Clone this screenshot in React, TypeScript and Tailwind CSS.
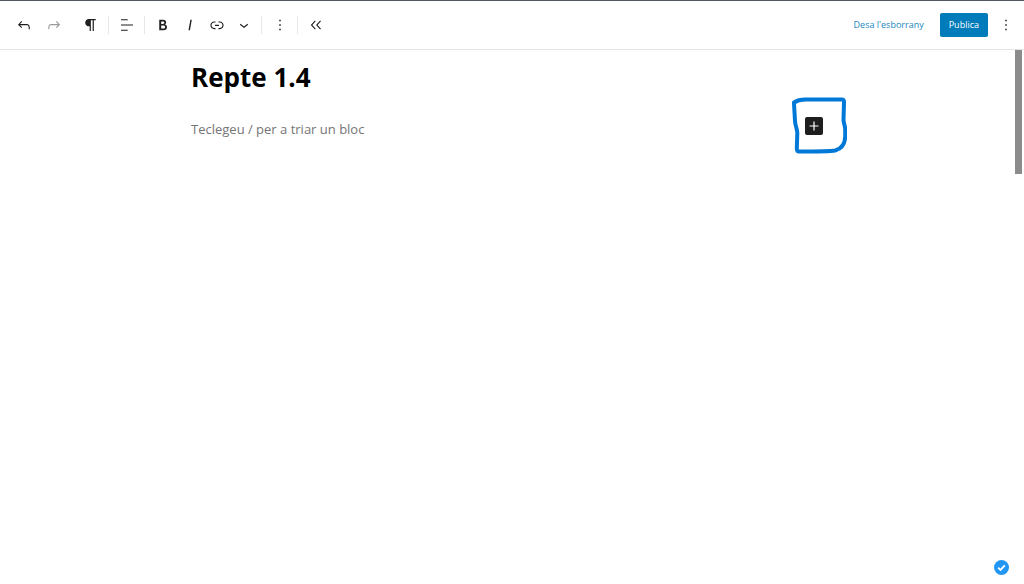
import { useState } from "react";
import type { ReactNode } from "react";
import clsx from "clsx";

const icons = {
  undo: "M18.3 11.7c-.6-.6-1.4-.9-2.3-.9H6.7l2.9-3.3-1.1-1-4.5 5L8.5 16l1-1-2.7-2.7H16c.5 0 .9.2 1.3.5 1 1 1 3.4 1 4.5v.3h1.5v-.2c0-1.5 0-4.3-1.5-5.7z",
  redo: "M15.6 6.5l-1.1 1 2.9 3.3H8c-.9 0-1.7.3-2.3.9-1.4 1.5-1.4 4.2-1.4 5.6v.2h1.5v-.3c0-1.1 0-3.5 1-4.5.3-.3.7-.5 1.3-.5h9.2L14.5 15l1.1 1.1 4.6-4.6-4.6-5z",
  paragraph: "M18.300 4v1.600h-2.500V20h-1.600V5.600h-2.400V20h-1.600v-6.200H9.300C6.500 13.800 4.300 11.600 4.300 8.900S6.500 4 9.300 4z",
  align: "M4 19.8h8.9v-1.5H4v1.5zm8.9-15.6H4v1.5h8.9V4.2zm-8.9 7v1.5h16v-1.5H4z",
  bold: "M14.7 11.3c1-.6 1.5-1.6 1.5-3 0-2.3-1.3-3.4-4-3.4H7v14h5.8c1.4 0 2.5-.3 3.3-1 .8-.7 1.2-1.7 1.2-2.9.1-1.9-.8-3.1-2.6-3.7zm-5.1-4h2.3c.6 0 1.1.1 1.4.4.3.3.5.7.5 1.2s-.2 1-.5 1.2c-.3.3-.8.4-1.4.4H9.6V7.3zm4.6 9c-.4.3-1 .4-1.7.4H9.6v-3.9h2.9c.7 0 1.3.2 1.7.5.4.3.6.8.6 1.5s-.2 1.2-.6 1.5z",
  italic: "M12.5 5L10 19h1.9l2.5-14z",
  link: "M15.6 7.2H14v1.5h1.6c2 0 3.7 1.7 3.7 3.7s-1.7 3.7-3.7 3.7H14v1.5h1.6c2.8 0 5.2-2.3 5.2-5.2 0-2.9-2.3-5.2-5.2-5.2zM4.7 12.4c0-2 1.7-3.7 3.7-3.7H10V7.2H8.4c-2.9 0-5.2 2.3-5.2 5.2 0 2.9 2.3 5.2 5.2 5.2H10v-1.5H8.4c-2 0-3.7-1.7-3.7-3.7zm4.6.9h5.3v-1.5H9.3v1.5z",
  chevron: "M17.5 11.6L12 16l-5.5-4.4.9-1.2L12 14l4.5-3.6 1 1.2z",
  more: "M13 19h-2v-2h2v2zm0-6h-2v-2h2v2zm0-6h-2V5h2v2z",
  collapse: "M11.6 7l-1.1-1-5.4 6 5.4 6 1.1-1-4.5-5zM18.6 7l-1.1-1-5.4 6 5.4 6 1.1-1-4.5-5z",
  plus: "M18 11.2h-5.2V6h-1.6v5.2H6v1.6h5.2V18h1.6v-5.2H18z",
};

type IconName = keyof typeof icons;

function Icon({ name }: { name: IconName }) {
  return (
    <svg viewBox="0 0 24 24" className="size-[18px] shrink-0" fill="currentColor" aria-hidden="true">
      <path d={icons[name]} />
    </svg>
  );
}

function ToolButton({ icon, label, className, disabled }: {
  icon: IconName;
  label: string;
  className: string;
  disabled?: boolean;
}) {
  return (
    <button
      type="button"
      aria-label={label}
      disabled={disabled}
      className={clsx("flex h-9 items-center justify-center text-[#1e1e1e] disabled:text-[#9a9a9a]", className)}
    >
      <Icon name={icon} />
    </button>
  );
}

function ToolGroup({ children, className }: { children: ReactNode; className?: string }) {
  return (
    <div className="flex items-center">
      <span className="h-[18px] w-px bg-gray-200" />
      <div className={clsx("flex", className)}>{children}</div>
    </div>
  );
}

export default function App() {
  const [title, setTitle] = useState("Repte 1.4");
  const [block, setBlock] = useState("");

  return (
    <div className="relative flex h-screen flex-col overflow-hidden border-t border-[#50575e] bg-white font-['Open_Sans','Noto_Sans',sans-serif]">
      {/* Toolbar */}
      <header className="flex h-[49px] shrink-0 items-center justify-between border-b border-[#e4e4e4] pl-[9px]">
        <div className="flex items-center">
          <ToolButton icon="undo" label="Desfés" className="w-[30px]" />
          <ToolButton icon="redo" label="Refés" className="w-[30px]" disabled />
          <ToolButton icon="paragraph" label="Paràgraf" className="ml-1 w-[35px]" />
          <ToolGroup>
            <ToolButton icon="align" label="Alinea" className="w-[35px]" />
          </ToolGroup>
          <ToolGroup className="px-1">
            <ToolButton icon="bold" label="Negreta" className="w-[27px]" />
            <ToolButton icon="italic" label="Cursiva" className="w-[27px]" />
            <ToolButton icon="link" label="Enllaç" className="w-[27px]" />
            <ToolButton icon="chevron" label="Més" className="w-[27px]" />
          </ToolGroup>
          <ToolGroup>
            <ToolButton icon="more" label="Opcions" className="w-[35px]" />
          </ToolGroup>
          <ToolGroup>
            <ToolButton icon="collapse" label="Amaga les eines" className="w-[35px]" />
          </ToolGroup>
        </div>

        <div className="flex items-center">
          <button type="button" className="mr-4 text-[9px] text-[#1a87be]">
            Desa l'esborrany
          </button>
          <button type="button" className="h-6 rounded-xs bg-[#007cba] px-[9px] text-[9px] text-white">
            Publica
          </button>
          <ToolButton icon="more" label="Més opcions" className="w-9" />
        </div>
      </header>

      {/* Editor */}
      <main className="relative flex-1 pr-[10px]">
        <div className="mx-auto w-full max-w-[632px] pt-[7px]">
          <input
            aria-label="Títol"
            value={title}
            onChange={(e) => setTitle(e.target.value)}
            className="block h-10 w-full text-[26px] font-bold text-black outline-none"
          />
          <div className="mt-5 flex items-start justify-between">
            <input
              aria-label="Bloc"
              value={block}
              onChange={(e) => setBlock(e.target.value)}
              placeholder="Teclegeu / per a triar un bloc"
              className="h-6 flex-1 text-[13px] text-black outline-none placeholder:text-[#757575]"
            />
            <div className="relative">
              <button type="button" aria-label="Afegeix un bloc" className="block rounded-xs bg-[#1e1e1e] text-white">
                <Icon name="plus" />
              </button>
              {/* hand-drawn mark round the inserter */}
              <svg
                viewBox="0 0 56 58"
                className="pointer-events-none absolute -top-5 -left-[14px] h-[58px] w-14 max-w-none"
                fill="none"
                stroke="#0078d7"
                strokeWidth="4"
                strokeLinecap="round"
                strokeLinejoin="round"
                aria-hidden="true"
              >
                <path d="M3 5.5C6 3.5 9 2.5 14 2.5H51c1.5 0 2 1 2 2.500L52.500 23c.3 4 1.700 6 1.700 10v6c0 8-3 12.500-10 14.500C38 54.500 20 54.500 8 54.500c-2 0-2-1-2.200-3L6.300 36C6 31 4.300 29 4 24L3 6.500" />
              </svg>
            </div>
          </div>
        </div>

        {/* scroll thumb */}
        <div className="absolute top-0 right-[2px] h-[124px] w-[7px] bg-[#8b8b8b]" />
      </main>

      <div className="absolute right-[15px] bottom-[9px] flex size-[15px] items-center justify-center rounded-full bg-[#2196f3]">
        <svg viewBox="0 0 16 16" className="size-[15px]" fill="none" stroke="white" strokeWidth="2" aria-hidden="true">
          <path d="M4.500 8.300 7 10.600 11.500 5.700" />
        </svg>
      </div>
    </div>
  );
}
